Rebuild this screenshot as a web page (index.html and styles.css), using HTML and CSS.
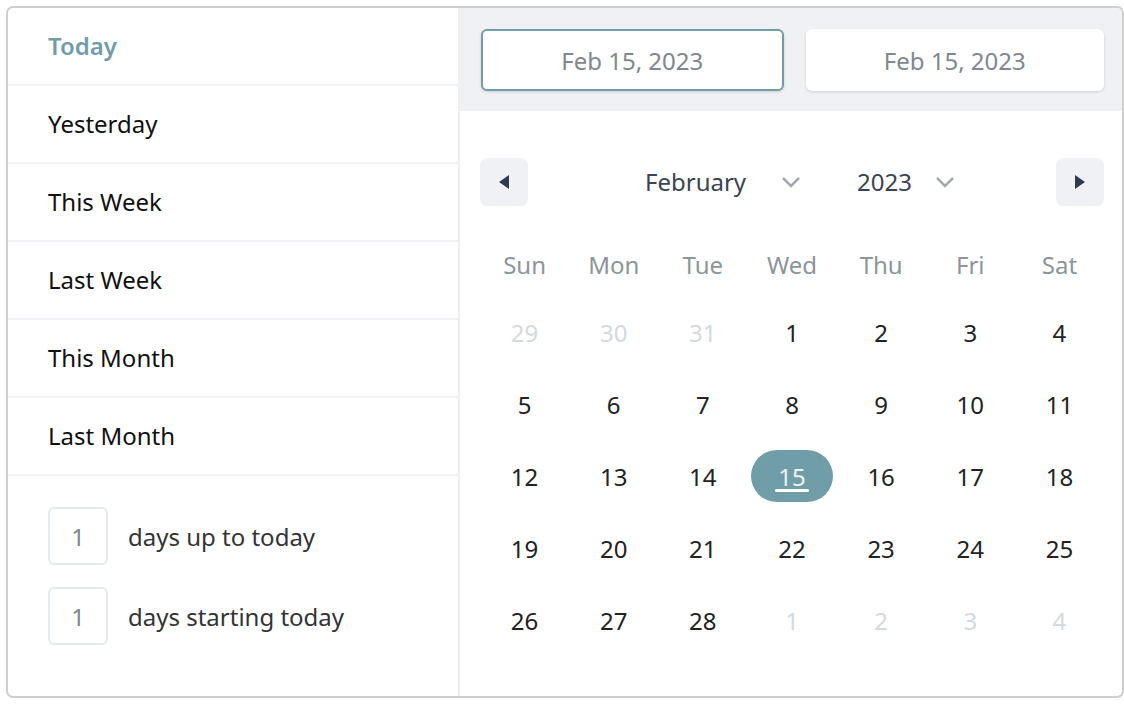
FILE: index.html
```html
<!DOCTYPE html>
<html>
<head>
<meta charset="utf-8">
<link rel="stylesheet" href="styles.css">
</head>
<body>
<div class="picker">
  <div class="presets">
    <div class="preset active">Today</div>
    <div class="preset">Yesterday</div>
    <div class="preset">This Week</div>
    <div class="preset">Last Week</div>
    <div class="preset">This Month</div>
    <div class="preset">Last Month</div>
    <div class="ranges">
      <div class="range"><div class="num">1</div><span class="range-label">days up to today</span></div>
      <div class="range"><div class="num">1</div><span class="range-label">days starting today</span></div>
    </div>
  </div>
  <div class="main">
    <div class="inputs">
      <div class="date-input focused">Feb 15, 2023</div>
      <div class="date-input">Feb 15, 2023</div>
    </div>
    <div class="calendar">
      <div class="nav">
        <div class="nav-btn"><svg width="12" height="16" viewBox="0 0 12 16"><polygon points="11,1 11,15 1,8" fill="#2e3c4f"/></svg></div>
        <div class="selects">
          <div class="select month"><span>February</span><svg width="20" height="12" viewBox="0 0 20 12"><polyline points="2,2 10,10 18,2" fill="none" stroke="#a4aab0" stroke-width="2.5"/></svg></div>
          <div class="select year"><span>2023</span><svg width="20" height="12" viewBox="0 0 20 12"><polyline points="2,2 10,10 18,2" fill="none" stroke="#a4aab0" stroke-width="2.5"/></svg></div>
        </div>
        <div class="nav-btn"><svg width="12" height="16" viewBox="0 0 12 16"><polygon points="1,1 1,15 11,8" fill="#2e3c4f"/></svg></div>
      </div>
      <div class="grid">
        <div class="wd">Sun</div><div class="wd">Mon</div><div class="wd">Tue</div><div class="wd">Wed</div><div class="wd">Thu</div><div class="wd">Fri</div><div class="wd">Sat</div>
        <div class="day muted">29</div><div class="day muted">30</div><div class="day muted">31</div><div class="day">1</div><div class="day">2</div><div class="day">3</div><div class="day">4</div>
        <div class="day">5</div><div class="day">6</div><div class="day">7</div><div class="day">8</div><div class="day">9</div><div class="day">10</div><div class="day">11</div>
        <div class="day">12</div><div class="day">13</div><div class="day">14</div><div class="day"><span class="selected">15</span></div><div class="day">16</div><div class="day">17</div><div class="day">18</div>
        <div class="day">19</div><div class="day">20</div><div class="day">21</div><div class="day">22</div><div class="day">23</div><div class="day">24</div><div class="day">25</div>
        <div class="day">26</div><div class="day">27</div><div class="day">28</div><div class="day muted">1</div><div class="day muted">2</div><div class="day muted">3</div><div class="day muted">4</div>
      </div>
    </div>
  </div>
</div>
</body>
</html>
```
FILE: styles.css
```css
* { box-sizing: border-box; }
html, body { margin: 0; padding: 0; background: #fff; }
body {
  font-family: "Noto Sans", "Open Sans", sans-serif;
  font-size: 24px;
  color: #1a1a1a;
}
.picker {
  margin: 6px 0 0 6px;
  width: 1118px;
  height: 692px;
  border: 2px solid #cfcfcf;
  border-radius: 7px;
  display: flex;
  overflow: hidden;
  background: #fff;
}
.presets {
  width: 452px;
  border-right: 2px solid #eef0f3;
  flex-shrink: 0;
}
.preset {
  height: 78px;
  border-bottom: 2px solid #f0f1f4;
  padding-left: 40px;
  display: flex;
  align-items: center;
  color: #111;
  padding-bottom: 2px;
}
.preset.active {
  color: #6f9ea8;
  font-weight: 600;
}
.ranges {
  padding: 31px 0 0 40px;
  display: flex;
  flex-direction: column;
  gap: 22px;
}
.range {
  display: flex;
  align-items: center;
}
.num {
  width: 60px;
  height: 58px;
  border: 2px solid #e4eaee;
  border-radius: 6px;
  display: flex;
  align-items: center;
  justify-content: center;
  color: #7c868b;
}
.range-label {
  margin-left: 20px;
  color: #333;
}
.main {
  flex: 1;
  display: flex;
  flex-direction: column;
}
.inputs {
  background: #eff1f5;
  padding: 21px 18px 20px 21px;
  display: flex;
  gap: 22px;
}
.date-input {
  flex: 1;
  height: 62px;
  background: #fff;
  border-radius: 6px;
  display: flex;
  align-items: center;
  justify-content: center;
  color: #7f888d;
  box-shadow: 0 1px 3px rgba(0, 0, 0, 0.15);
}
.date-input.focused {
  border: 2px solid #6f9ea8;
}
.calendar {
  padding: 47px 18px 0 20px;
}
.nav {
  display: flex;
  align-items: center;
  height: 48px;
}
.nav-btn {
  width: 48px;
  height: 48px;
  background: #eff1f5;
  border-radius: 7px;
  display: flex;
  align-items: center;
  justify-content: center;
}
.selects {
  flex: 1;
  display: flex;
  justify-content: center;
  gap: 56px;
  padding-left: 16px;
  color: #3a4452;
}
.select {
  display: flex;
  align-items: center;
  justify-content: space-between;
  padding-bottom: 2px;
}
.select svg { margin-top: 2px; }
.select.month { width: 156px; }
.select.year { width: 98px; }
.grid {
  display: grid;
  grid-template-columns: repeat(7, 1fr);
  grid-template-rows: 62px repeat(5, 72px);
  margin-top: 28px;
}
.wd {
  display: flex;
  align-items: center;
  justify-content: center;
  color: #8b959a;
  padding-bottom: 2px;
}
.day {
  display: flex;
  align-items: center;
  justify-content: center;
  color: #222;
}
.day.muted { color: #d4d9de; }
.selected {
  width: 82px;
  height: 52px;
  border-radius: 26px;
  background: #6f9ea8;
  color: #eef4f6;
  display: flex;
  align-items: center;
  justify-content: center;
  position: relative;
}
.selected::after {
  content: "";
  position: absolute;
  left: 24px;
  right: 24px;
  bottom: 10px;
  height: 3px;
  border-radius: 2px;
  background: #fff;
}
```
